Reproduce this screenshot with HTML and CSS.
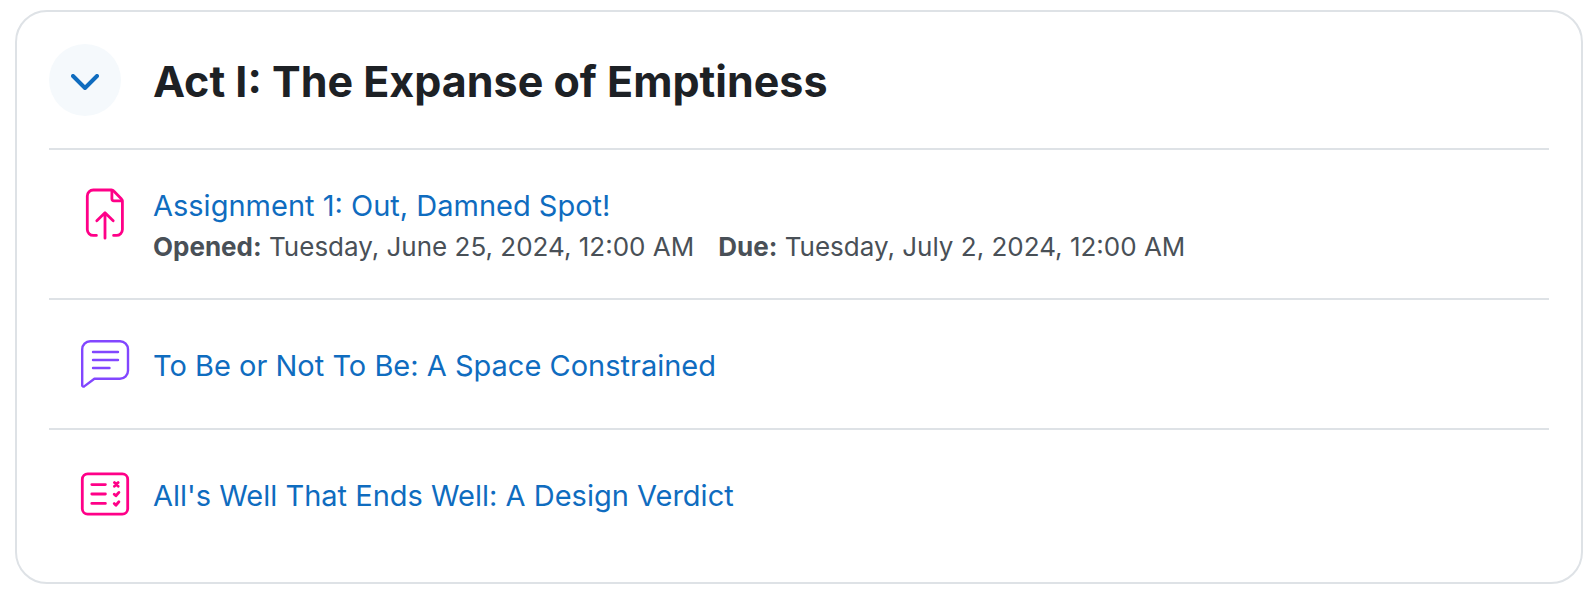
FILE: index.html
```html
<!DOCTYPE html>
<html lang="en">

<head>
    <meta charset="UTF-8">
    <meta name="viewport" content="width=device-width, initial-scale=1.0">
    <title>Act I: The Expanse of Emptiness</title>
    <link rel="stylesheet" href="styles.css">
</head>

<body>
    <section class="section">
        <header class="section-header">
            <button class="toggle" type="button" aria-label="Collapse" aria-expanded="true">
                <svg class="chevron" viewBox="0 0 28 16">
                    <path d="M2 2l12 12L26 2" />
                </svg>
            </button>
            <h3 class="section-title">Act I: The Expanse of Emptiness</h3>
        </header>

        <ul class="activities">
            <li class="activity">
                <svg class="icon icon-assessment" viewBox="0 0 48 48">
                    <path d="M15.4 45.4h-3.1a6 6 0 0 1-6-6V6a6 6 0 0 1 6-6h18.2a3 3 0 0 1 2.2 1l7.8 8a3 3 0 0 1 .9 2.2v28.2a6 6 0 0 1-6 6h-2.8" />
                    <path d="M30.9.4v8.4a2 2 0 0 0 2 2h8" />
                    <path d="M24 48.2V23M15.8 30.8L24 22.8l8.2 8" />
                </svg>
                <div class="activity-body">
                    <a class="activity-link" href="#">Assignment 1: Out, Damned Spot!</a>
                    <div class="dates">
                        <span><strong>Opened:</strong> Tuesday, June 25, 2024, 12:00 AM</span>
                        <span><strong>Due:</strong> Tuesday, July 2, 2024, 12:00 AM</span>
                    </div>
                </div>
            </li>
            <li class="activity">
                <svg class="icon icon-forum" viewBox="0 0 48 48">
                    <path d="M9.2 1.2H39a8 8 0 0 1 8 8v21.6a8 8 0 0 1-8 8H13.4L3.2 46.4a1.3 1.3 0 0 1-2-1V9.2a8 8 0 0 1 8-8z" />
                    <path d="M12 12h25M12 20h25M12 28h16.5" />
                </svg>
                <div class="activity-body">
                    <a class="activity-link" href="#">To Be or Not To Be: A Space Constrained</a>
                </div>
            </li>
            <li class="activity">
                <svg class="icon icon-assessment" viewBox="0 0 48 48">
                    <rect x="1.3" y="3.8" width="45.4" height="40.4" rx="5.4" />
                    <path d="M10.8 14.6h13.6M10.8 24h13.6M10.8 33.4h13.6" />
                    <path d="M33.4 12.6l3.8 3.6M37.2 12.6l-3.8 3.6M33.2 24.2l1.7 1.6 3-3.4M33.2 33.6l1.7 1.6 3-3.4" />
                </svg>
                <div class="activity-body">
                    <a class="activity-link" href="#">All's Well That Ends Well: A Design Verdict</a>
                </div>
            </li>
        </ul>
    </section>
</body>

</html>
```

FILE: styles.css
```css
body {
    margin: 10px 9px 10px 15px;
    background-color: #fff;
    color: #1d2125;
    font-family: Inter, "Liberation Sans", sans-serif;
}

.section {
    padding: 32px 32px 24px;
    border: 2px solid #dee2e6;
    border-radius: 32px;
}

.section-header {
    display: flex;
    align-items: center;
    gap: 32px;
    padding-bottom: 32px;
}

.toggle {
    display: flex;
    align-items: center;
    justify-content: center;
    flex-shrink: 0;
    width: 72px;
    height: 72px;
    padding: 4px 0 0;
    border: none;
    border-radius: 50%;
    background-color: #f5f9fc;
    cursor: pointer;
}

.chevron {
    width: 28px;
    height: 16px;
    fill: none;
    stroke: #0f6cbf;
    stroke-width: 4;
    stroke-linecap: round;
    stroke-linejoin: round;
}

.section-title {
    margin: 0;
    padding-top: 2px;
    font-size: 43px;
    line-height: 52px;
    font-weight: 700;
}

.activities {
    margin: 0;
    padding: 0;
    list-style: none;
}

.activity {
    display: flex;
    gap: 24px;
    padding: 34px 32px;
    border-top: 2px solid #dee2e6;
}

.icon {
    flex-shrink: 0;
    width: 48px;
    height: 48px;
    margin: 6px 0;
    overflow: visible;
    fill: none;
    stroke-width: 2.8;
    stroke-linecap: round;
    stroke-linejoin: round;
}

.icon-assessment {
    stroke: #ff0088;
}

.icon-forum {
    stroke: #8246ff;
    stroke-width: 2.4;
}

.activity-body {
    align-self: center;
    padding-top: 4px;
}

.activity-link {
    display: block;
    color: #0f6cbf;
    font-size: 29px;
    line-height: 36px;
    text-decoration: none;
}

.activity-link:hover {
    text-decoration: underline;
}

.dates {
    display: flex;
    flex-wrap: wrap;
    column-gap: 24px;
    margin-top: 6px;
    color: #495057;
    font-size: 26px;
    line-height: 34px;
}
```
